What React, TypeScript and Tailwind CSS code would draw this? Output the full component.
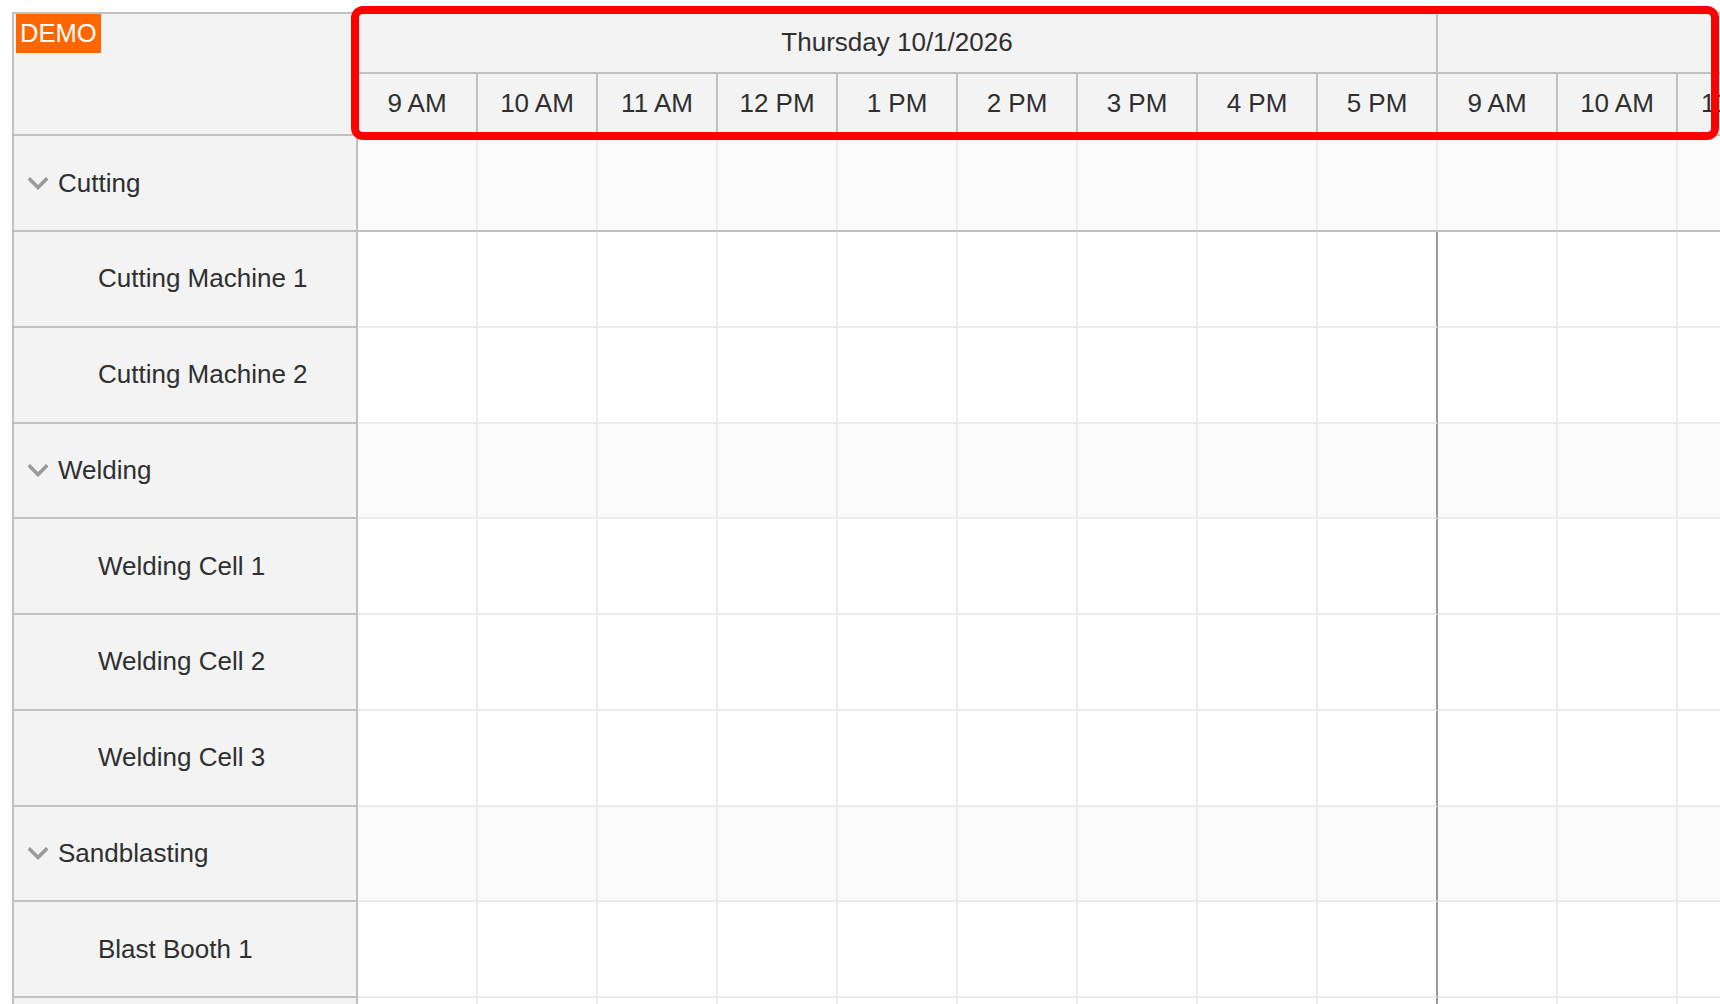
import React from "react";

type Row = { name: string; group?: boolean };

const rows: Row[] = [
  { name: "Cutting", group: true },
  { name: "Cutting Machine 1" },
  { name: "Cutting Machine 2" },
  { name: "Welding", group: true },
  { name: "Welding Cell 1" },
  { name: "Welding Cell 2" },
  { name: "Welding Cell 3" },
  { name: "Sandblasting", group: true },
  { name: "Blast Booth 1" },
  { name: "Blast Booth 2" },
];

const days = ["Thursday 10/1/2026", "Friday 10/2/2026"];
const hours = ["9 AM", "10 AM", "11 AM", "12 PM", "1 PM", "2 PM", "3 PM", "4 PM", "5 PM"];

function Chevron() {
  return (
    <svg width="20" height="13" viewBox="0 0 20 13" className="shrink-0">
      <polyline
        points="2,2.5 10,10.5 18,2.5"
        fill="none"
        stroke="#9a9a9a"
        strokeWidth="3.6"
        strokeLinecap="square"
      />
    </svg>
  );
}

export default function App() {
  const [frozen, ...body] = rows;

  return (
    <div className="relative h-screen w-full overflow-hidden bg-white font-['Liberation_Sans',Arial,sans-serif] text-[26px] text-[#2f2f2f]">
      <div className="ml-[12px] mt-[12px] flex border-l-2 border-t-2 border-[#c0c0c0]">
        {/* row headers */}
        <div className="w-[344px] shrink-0 border-r-2 border-[#c0c0c0] bg-[#f3f3f3]">
          <div className="h-[122px] border-b-2 border-[#c0c0c0] pl-[2px]">
            <span className="inline-flex h-[39px] items-center bg-[#ff6600] px-[4px] text-[25.6px] text-white">
              DEMO
            </span>
          </div>
          {rows.map((r, idx) => (
            <div
              key={r.name}
              className={`flex items-center border-b-2 border-[#c0c0c0] ${
                idx === 0 ? "h-[96px]" : "h-[95.75px]"
              }`}
            >
              {r.group ? (
                <div className="flex items-center gap-[10px] pl-[14px]">
                  <Chevron />
                  <span>{r.name}</span>
                </div>
              ) : (
                <span className="pl-[84px]">{r.name}</span>
              )}
            </div>
          ))}
        </div>

        {/* timeline */}
        <div className="min-w-0 flex-1 overflow-hidden">
          <div className="flex h-[60px] w-max border-b-2 border-[#c0c0c0] bg-[#f3f3f3]">
            {days.map((d, i) => (
              <div
                key={d}
                className="flex w-[1080px] shrink-0 items-center justify-center border-r-2 border-[#c0c0c0] pb-[2px]"
              >
                {i === 0 ? d : ""}
              </div>
            ))}
          </div>
          <div className="flex h-[62px] w-max border-b-2 border-[#c0c0c0] bg-[#f3f3f3]">
            {days.map((d) =>
              hours.map((h) => (
                <div
                  key={d + h}
                  className="flex w-[120px] shrink-0 items-center justify-center border-r-2 border-[#c0c0c0] pb-[2px]"
                >
                  {h}
                </div>
              ))
            )}
          </div>

          <div className="flex h-[96px] w-max border-b-2 border-[#c0c0c0] bg-[#fafafa]">
            {days.map((d) =>
              hours.map((h) => (
                <div
                  key={frozen.name + d + h}
                  className="w-[120px] shrink-0 border-r-2 border-[#ebebeb]"
                />
              ))
            )}
          </div>

          {body.map((r) => (
            <div
              key={r.name}
              className={`flex h-[95.75px] w-max ${r.group ? "bg-[#fafafa]" : "bg-white"}`}
            >
              {days.map((d) =>
                hours.map((h, i) => (
                  <div
                    key={r.name + d + h}
                    className={`w-[120px] shrink-0 border-b-2 border-r-2 border-b-[#ebebeb] ${
                      i === hours.length - 1 ? "border-r-[#9a9a9a]" : "border-r-[#ebebeb]"
                    }`}
                  />
                ))
              )}
            </div>
          ))}
        </div>
      </div>

      {/* highlight over the time header */}
      <div className="pointer-events-none absolute left-[351px] top-[6px] h-[134px] w-[1368px] rounded-[12px] border-[8px] border-[#ff0000]" />
    </div>
  );
}
